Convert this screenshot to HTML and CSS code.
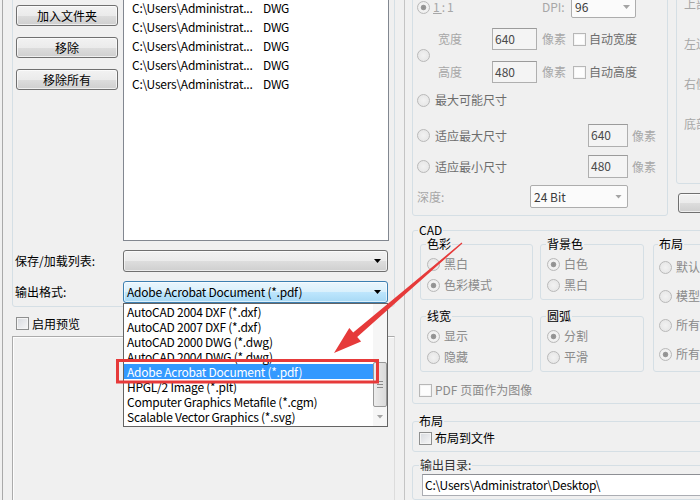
FILE: index.html
```html
<!DOCTYPE html>
<html lang="zh-CN">
<head>
<meta charset="utf-8">
<title>输出设置</title>
<link rel="stylesheet" href="styles.css">
</head>
<body>
<div class="dialog">

  <!-- left side: file list, output format, preview -->
  <div class="pane-left">
    <div class="group files">
      <div class="file-row">
        <div class="file-buttons">
          <button class="btn">加入文件夹</button>
          <button class="btn">移除</button>
          <button class="btn">移除所有</button>
        </div>
        <ul class="file-list">
          <li><span class="path">C:\Users\Administrat...</span><span>DWG</span></li>
          <li><span class="path">C:\Users\Administrat...</span><span>DWG</span></li>
          <li><span class="path">C:\Users\Administrat...</span><span>DWG</span></li>
          <li><span class="path">C:\Users\Administrat...</span><span>DWG</span></li>
          <li><span class="path">C:\Users\Administrat...</span><span>DWG</span></li>
        </ul>
      </div>
      <div class="field-grid">
        <span class="field-label">保存/加载列表:</span>
        <div class="combo"><span class="combo-value"></span><span class="arrow"></span></div>
        <span class="field-label">输出格式:</span>
        <div class="combo-wrap">
          <div class="combo open"><span class="combo-value latin">Adobe Acrobat Document (*.pdf)</span><span class="arrow"></span></div>
          <div class="dropdown">
            <ul class="options">
              <li>AutoCAD 2004 DXF (*.dxf)</li>
              <li>AutoCAD 2007 DXF (*.dxf)</li>
              <li>AutoCAD 2000 DWG (*.dwg)</li>
              <li>AutoCAD 2004 DWG (*.dwg)</li>
              <li class="sel">Adobe Acrobat Document (*.pdf)</li>
              <li>HPGL/2 Image (*.plt)</li>
              <li>Computer Graphics Metafile (*.cgm)</li>
              <li>Scalable Vector Graphics (*.svg)</li>
            </ul>
            <div class="vscroll">
              <div class="track"></div>
              <div class="thumb"><i></i><i></i><i></i></div>
              <div class="down"><span class="arrow grey"></span></div>
            </div>
          </div>
        </div>
      </div>
    </div>
    <div class="check-row"><span class="check"></span><span>启用预览</span></div>
    <div class="preview"></div>
  </div>

  <!-- right side: image options, CAD options, layout, output folder -->
  <div class="pane-right">
    <div class="top-row">
      <div class="group img-group">
        <div class="img-row r1">
          <span class="radio on"></span>
          <span class="dim ratio"><u>1</u>:1</span>
          <span class="dim dpi">DPI:</span>
          <div class="combo off dpi-combo"><span class="combo-value">96</span><span class="arrow grey"></span></div>
        </div>
        <div class="img-row r2">
          <span class="radio"></span>
          <div class="size-grid">
            <span class="dim">宽度</span><span class="input off">640</span><span class="dim unit">像素</span><span class="check off"></span><span class="dim-strong">自动宽度</span>
            <span class="dim">高度</span><span class="input off">480</span><span class="dim unit">像素</span><span class="check off"></span><span class="dim-strong">自动高度</span>
          </div>
        </div>
        <div class="img-row r3">
          <span class="radio"></span><span class="dim-strong">最大可能尺寸</span>
        </div>
        <div class="img-row r4">
          <span class="radio"></span><span class="dim-strong fit">适应最大尺寸</span>
          <span class="input off small">640</span><span class="dim unit2">像素</span>
        </div>
        <div class="img-row r5">
          <span class="radio"></span><span class="dim-strong fit">适应最小尺寸</span>
          <span class="input off small">480</span><span class="dim unit2">像素</span>
        </div>
        <div class="img-row r6">
          <span class="dim depth">深度:</span>
          <div class="combo off depth-combo"><span class="combo-value">24 Bit</span><span class="arrow grey"></span></div>
        </div>
      </div>
      <div class="side">
        <div class="group margin-group">
          <span>上部边距</span>
          <span>左边距</span>
          <span>右侧边距</span>
          <span>底部边距</span>
        </div>
        <button class="btn side-btn">默认值</button>
      </div>
    </div>

    <fieldset class="box cad">
      <legend>CAD</legend>
      <div class="cad-grid">
        <fieldset class="box sub">
          <legend>色彩</legend>
          <div class="opts">
            <div class="opt"><span class="radio"></span><span>黑白</span></div>
            <div class="opt"><span class="radio on"></span><span>色彩模式</span></div>
          </div>
        </fieldset>
        <fieldset class="box sub">
          <legend>背景色</legend>
          <div class="opts">
            <div class="opt"><span class="radio on"></span><span>白色</span></div>
            <div class="opt"><span class="radio"></span><span>黑白</span></div>
          </div>
        </fieldset>
        <fieldset class="box sub layout-sub">
          <legend>布局</legend>
          <div class="opts">
            <div class="opt"><span class="radio"></span><span>默认布局</span></div>
            <div class="opt"><span class="radio"></span><span>模型空间</span></div>
            <div class="opt"><span class="radio"></span><span>所有布局</span></div>
            <div class="opt"><span class="radio on"></span><span>所有布局</span></div>
          </div>
        </fieldset>
        <fieldset class="box sub">
          <legend>线宽</legend>
          <div class="opts">
            <div class="opt"><span class="radio on"></span><span>显示</span></div>
            <div class="opt"><span class="radio"></span><span>隐藏</span></div>
          </div>
        </fieldset>
        <fieldset class="box sub">
          <legend>圆弧</legend>
          <div class="opts">
            <div class="opt"><span class="radio on"></span><span>分割</span></div>
            <div class="opt"><span class="radio"></span><span>平滑</span></div>
          </div>
        </fieldset>
      </div>
      <div class="check-line pdf"><span class="check off"></span><span>PDF 页面作为图像</span></div>
    </fieldset>

    <fieldset class="box layout-file">
      <legend>布局</legend>
      <div class="check-line"><span class="check"></span><span>布局到文件</span></div>
    </fieldset>

    <fieldset class="box out-dir">
      <legend>输出目录:</legend>
      <div class="path-input">C:\Users\Administrator\Desktop\</div>
    </fieldset>
  </div>
</div>

<!-- red call-out drawn over the dialog -->
<svg class="callout" width="700" height="500" viewBox="0 0 700 500">
  <rect x="117.5" y="360.5" width="260" height="21.5" fill="none" stroke="#e63a3a" stroke-width="3"/>
  <polygon fill="#e63a3a" points="462.4,243.4 357.2,337 361.1,341.5 334,353 349.3,327.9 353.2,332.4 461.6,242.6"/>
</svg>
</body>
</html>
```

FILE: styles.css
```css
* {
  box-sizing: border-box;
}

html,
body {
  margin: 0;
  padding: 0;
}

body {
  position: relative;
  width: 700px;
  height: 500px;
  overflow: hidden;
  background: #f0f0f0;
  color: #000;
  font-family: "Noto Sans CJK SC", "Noto Sans", sans-serif;
  font-size: 12px;
  line-height: 16px;
}

.dialog {
  display: flex;
  align-items: flex-start;
  height: 500px;
  margin-left: 2px;
  padding-left: 9px;
  border-left: 1px solid #a9a9a9;
}

/* ---------- shared controls ---------- */

.group {
  border: 1px solid #d5dfe5;
  border-radius: 3px;
}

.btn {
  display: block;
  height: 21px;
  padding: 0;
  border: 1px solid #707070;
  border-radius: 3px;
  background: linear-gradient(#f2f2f2 0%, #ebebeb 50%, #dddddd 51%, #cfcfcf 100%);
  box-shadow: inset 0 0 0 1px rgba(255, 255, 255, 0.65);
  color: #000;
  font: inherit;
  line-height: 18px;
}

.combo {
  position: relative;
  display: flex;
  align-items: center;
  justify-content: space-between;
  height: 22px;
  padding: 0 6px 0 3px;
  border: 1px solid #707070;
  border-radius: 3px;
  background: linear-gradient(#f2f2f2 0%, #ebebeb 50%, #dddddd 51%, #cfcfcf 100%);
  box-shadow: inset 0 0 0 1px rgba(255, 255, 255, 0.6);
  white-space: nowrap;
}

.combo.open {
  border-color: #3c7fb1;
  background: linear-gradient(#eaf6fd 0%, #d9f0fc 50%, #bee6fd 51%, #a7d9f5 100%);
}

.combo.off {
  border-color: #adadad;
  border-radius: 2px;
  background: #fbfbfb;
  box-shadow: none;
  color: #3c3c3c;
  padding-right: 5px;
}

/* Latin strings in the lists run a little tighter than the CJK face */
.latin,
.options,
.file-list,
.path-input {
  letter-spacing: -0.25px;
}

.arrow {
  display: block;
  width: 7px;
  height: 4px;
  background: #000;
  clip-path: polygon(0 0, 100% 0, 50% 100%);
}

.arrow.grey {
  background: #a4a4a4;
}

.radio {
  flex: none;
  display: block;
  width: 13px;
  height: 13px;
  border: 1px solid #b9b9b9;
  border-radius: 50%;
  background: radial-gradient(circle at 50% 50%, #f2f2f2 0%, #e3e3e3 100%);
}

.radio.on {
  background: radial-gradient(circle at 50% 50%, #8e8e8e 0, #9a9a9a 2.4px, #f4f4f4 3.2px, #e6e6e6 100%);
}

.check {
  flex: none;
  display: block;
  width: 13px;
  height: 13px;
  border: 1px solid #8e8f8f;
  background: linear-gradient(135deg, #d6d9de 0%, #f7f7f7 100%);
  box-shadow: inset 0 0 0 1px #f4f4f4;
}

.check.off {
  border-color: #b7b7b7;
  background: #fdfdfd;
}

.input {
  display: block;
  height: 22px;
  padding-left: 2px;
  border: 1px solid #afafaf;
  border-top-color: #9b9b9b;
  background: #f4f4f4;
  color: #4a4a4a;
  line-height: 20px;
}

.dim {
  color: #a7a7a7;
}

.dim-strong {
  color: #6d6d6d;
}

/* ---------- left pane ---------- */

.pane-left {
  flex: none;
  width: 383px;
}

.files {
  margin-top: -10px;
  padding: 3px 5px 3px 3px;
}

.file-row {
  display: flex;
  align-items: flex-start;
  gap: 5px;
}

.file-buttons {
  display: flex;
  flex-direction: column;
  gap: 11px;
  width: 102px;
  padding-top: 11px;
}

.file-list {
  width: 266px;
  height: 247px;
  margin: 0;
  padding: 3px 0 0 8px;
  list-style: none;
  border: 1px solid #828790;
  background: #fff;
}

.file-list li {
  display: flex;
  height: 19px;
  line-height: 19px;
  white-space: nowrap;
}

.file-list .path {
  width: 131px;
}

.field-grid {
  display: grid;
  grid-template-columns: 108px 265px;
  grid-auto-rows: 22px;
  row-gap: 9px;
  align-items: center;
  margin: 9px 0 0 -1px;
}

.combo-wrap {
  position: relative;
  height: 22px;
}

.dropdown {
  position: absolute;
  top: 100%;
  left: 0;
  z-index: 2;
  display: flex;
  width: 265px;
  height: 124px;
  border: 1px solid #646464;
  background: #fff;
}

.options {
  flex: 1;
  margin: 0;
  padding: 0;
  list-style: none;
}

.options li {
  height: 15px;
  padding-left: 3px;
  line-height: 15px;
  white-space: nowrap;
}

.options .sel {
  background: #3399ff;
  color: #fff;
}

.vscroll {
  display: flex;
  flex-direction: column;
  width: 14px;
  background: #f6f6f6;
}

.vscroll .track {
  flex: 1;
}

.vscroll .thumb {
  display: flex;
  flex-direction: column;
  align-items: center;
  justify-content: center;
  gap: 2px;
  height: 45px;
  border: 1px solid #989898;
  border-radius: 2px;
  background: linear-gradient(90deg, #ececec, #dadada);
}

.vscroll .thumb i {
  display: block;
  width: 6px;
  height: 1px;
  background: #8a8a8a;
}

.vscroll .down {
  display: flex;
  align-items: center;
  justify-content: center;
  height: 19px;
}

.check-row {
  display: flex;
  align-items: center;
  gap: 3px;
  height: 13px;
  margin: 10px 0 0 4px;
}

.preview {
  height: 200px;
  margin-top: 6px;
  border: 1px solid #ababab;
  border-right-color: #dcdcdc;
  box-shadow: inset 1px 1px 0 #fdfdfd;
}

/* ---------- right pane ---------- */

.pane-right {
  flex: none;
  width: 320px;
  height: 500px;
  margin-left: 9px;
  padding-left: 7px;
  border-left: 1px solid #c4c4c4;
}

.top-row {
  display: flex;
  align-items: flex-start;
  gap: 8px;
  margin-top: -10px;
}

.img-group {
  flex: none;
  width: 256px;
  padding: 5px 0 7px 4px;
}

.img-row {
  display: flex;
  align-items: center;
}

.r1 {
  height: 22px;
}

.r1 .radio {
  margin-right: 3px;
}

.ratio {
  width: 109px;
  letter-spacing: 2px;
}

.dpi {
  width: 29px;
}

.dpi-combo {
  width: 65px;
}

.r2 {
  height: 55px;
  margin-top: 10px;
}

.r2 .radio {
  margin-right: 8px;
}

.size-grid {
  display: grid;
  grid-template-columns: 54px 45px 36px 16px auto;
  grid-template-rows: 22px 22px;
  row-gap: 11px;
  align-items: center;
}

.size-grid .unit {
  padding-left: 5px;
}

.r3 {
  height: 18px;
  margin-top: 8px;
}

.r3 .radio,
.r4 .radio,
.r5 .radio {
  margin-right: 5px;
}

.r4,
.r5,
.r6 {
  height: 23px;
}

.r4 {
  margin-top: 15px;
}

.r5 {
  margin-top: 8px;
}

.r6 {
  margin-top: 7px;
}

.fit {
  width: 153px;
}

.input.small {
  width: 40px;
  height: 23px;
}

.unit2 {
  margin-left: 4px;
}

.depth {
  width: 113px;
}

.depth-combo {
  width: 98px;
  height: 23px;
}

.side {
  display: flex;
  flex-direction: column;
  align-items: flex-start;
}

.margin-group {
  display: flex;
  flex-direction: column;
  gap: 24px;
  width: 60px;
  height: 194px;
  padding: 5px 0 0 7px;
  color: #a7a7a7;
  white-space: nowrap;
}

/* only the left end of this button shows inside the dialog */
.side-btn {
  width: 96px;
  height: 20px;
  margin: 9px 0 0 2px;
}

/* group boxes with a caption on the border */

.box {
  min-width: 0;
  margin: 0;
  border: 1px solid #d5dfe5;
  border-radius: 3px;
}

.box > legend {
  padding: 0 1px;
  margin-left: -1px;
  line-height: 14px;
}

.cad {
  width: 300px;
  margin-top: 6px;
  padding: 0 0 5px 7px;
}

.cad > legend {
  margin-left: -2px;
  line-height: 16px;
}

.cad-grid {
  display: grid;
  grid-template-columns: 113px 104px 110px;
  column-gap: 7px;
  row-gap: 9px;
  margin-top: -1px;
}

.sub {
  padding: 4px 0 5px 6px;
}

.layout-sub {
  grid-column: 3;
  grid-row: 1 / span 2;
  margin-left: 2px;
  padding: 7px 0 0 5px;
}

.opts {
  display: flex;
  flex-direction: column;
  gap: 3px;
}

.layout-sub .opts {
  gap: 11px;
}

.opt {
  display: flex;
  align-items: center;
  gap: 4px;
  height: 18px;
  color: #8a8a8a;
  white-space: nowrap;
}

.check-line {
  display: flex;
  align-items: center;
  gap: 3px;
  height: 16px;
  white-space: nowrap;
}

.check-line.pdf {
  margin: 10px 0 0 -1px;
  color: #8a8a8a;
}

.layout-file {
  width: 300px;
  margin-top: 10px;
  padding: 2px 0 5px 6px;
}

.layout-file > legend {
  margin-left: 0;
  padding: 0 1px 0 0;
}

.out-dir {
  width: 300px;
  margin-top: 6px;
  padding: 2px 0 3px 9px;
}

.out-dir > legend {
  margin-left: -3px;
  color: #333;
}

.path-input {
  width: 290px;
  height: 22px;
  padding-left: 2px;
  border: 1px solid #abadb3;
  border-top-color: #8d8f94;
  background: #fff;
  line-height: 20px;
  white-space: nowrap;
}

/* ---------- call-out overlay ---------- */

.callout {
  position: absolute;
  top: 0;
  left: 0;
  z-index: 5;
  pointer-events: none;
}
```
